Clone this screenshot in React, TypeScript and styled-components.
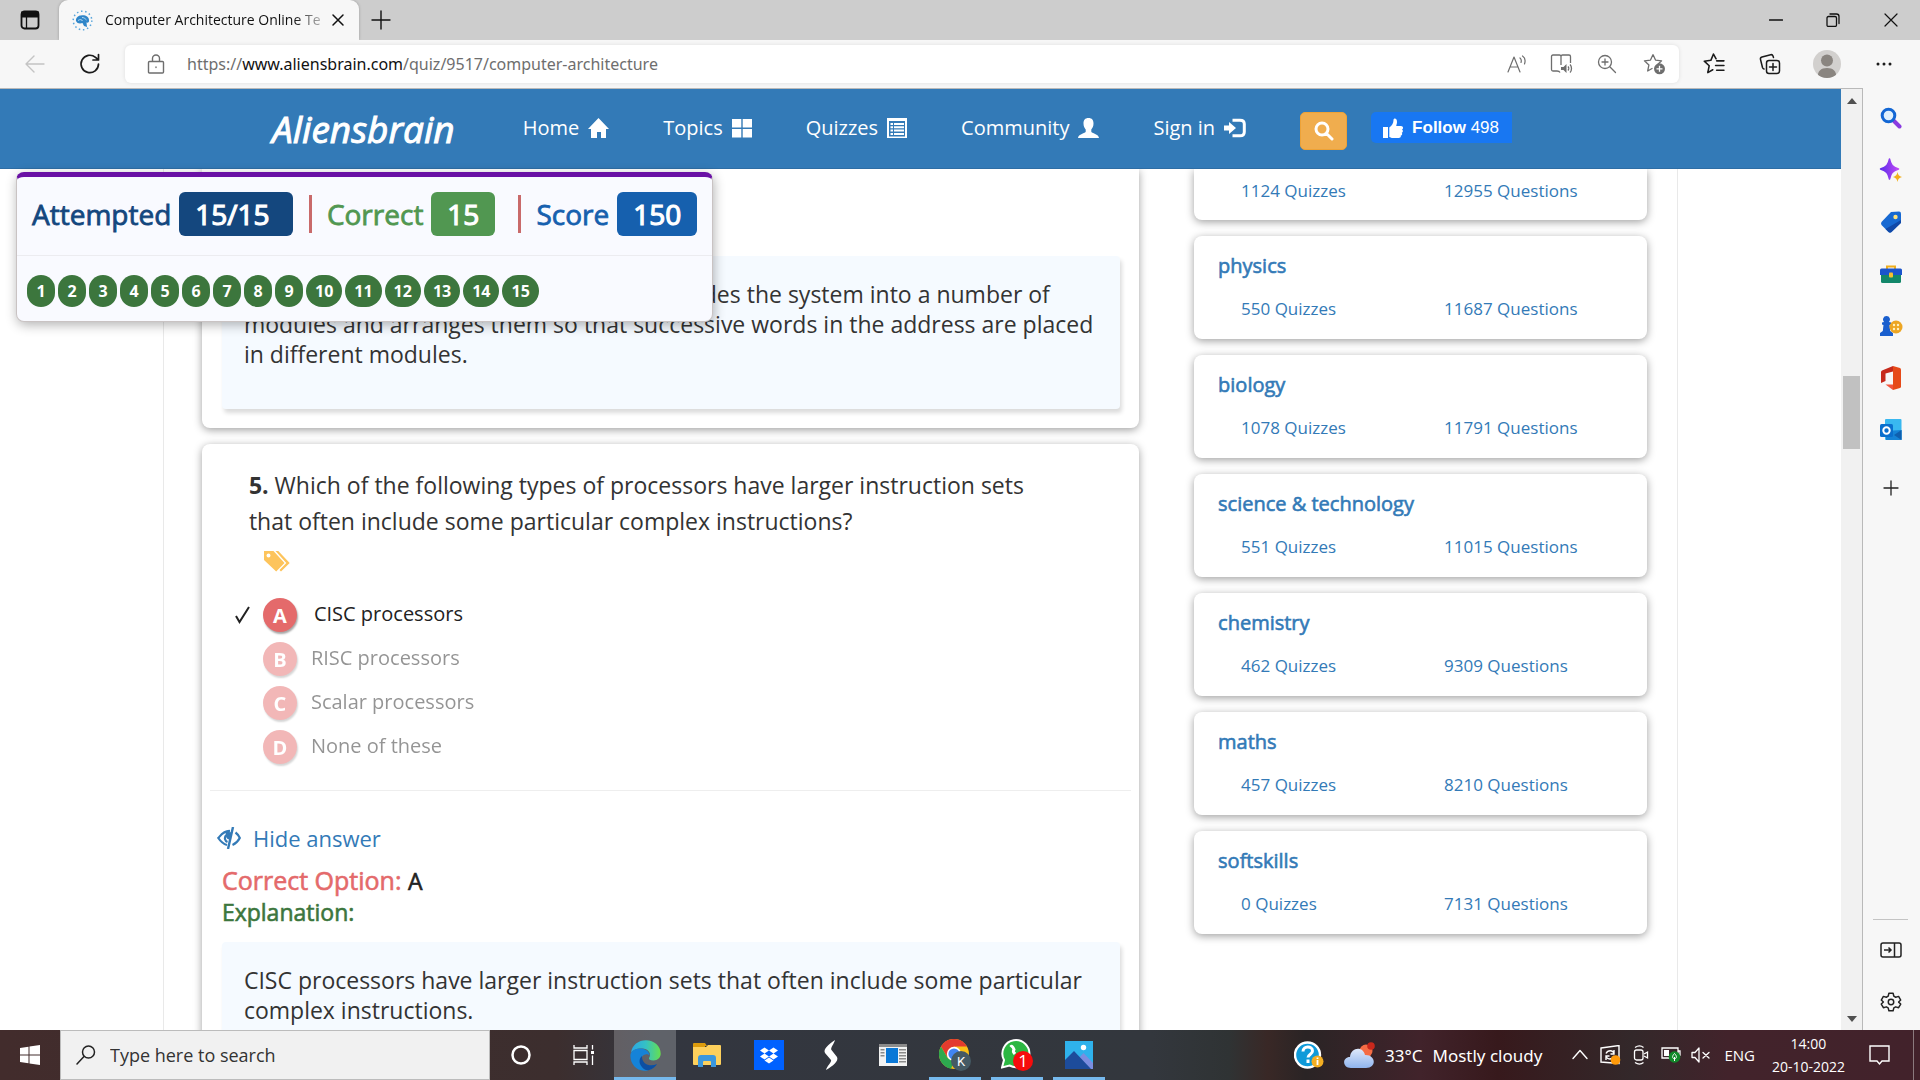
import React from "react";
import styled, { createGlobalStyle, css } from "styled-components";

const ui = `"Open Sans", "Noto Sans", sans-serif`;
const chrome = `"Noto Sans", "Open Sans", sans-serif`;
const blue = "#337ab7";

const Global = createGlobalStyle`
  *, *::before, *::after { box-sizing: border-box; }
  html, body { margin: 0; padding: 0; overflow: hidden; }
  body { font-family: ${ui}; font-size: 16px; color: #333; background: #fff; }
  button { font: inherit; color: inherit; border: 0; padding: 0; background: none; cursor: pointer; }
  h1, h2, h3, p, ul, ol { margin: 0; padding: 0; font-weight: 400; list-style: none; }
  a { text-decoration: none; color: inherit; }
  svg { display: block; flex: none; }
`;

const heavy = css`
  -webkit-text-stroke: 0.6px currentColor;
`;

const Screen = styled.div`
  display: flex;
  flex-direction: column;
  height: 100vh;
  overflow: hidden;
`;

/* ---------- browser chrome ---------- */

const TabStrip = styled.header`
  flex: none;
  height: 40px;
  display: flex;
  align-items: stretch;
  background: #cdcdcd;
  color: #111;
`;
const IconButton = styled.button<{ $w: number; $muted?: boolean }>`
  width: ${(p) => p.$w}px;
  flex: none;
  display: flex;
  align-items: center;
  justify-content: center;
  color: ${(p) => (p.$muted ? "#c4c4c4" : "inherit")};
`;
const Tab = styled.div`
  width: 300px;
  display: flex;
  align-items: center;
  gap: 12px;
  padding: 0 11px 0 13px;
  background: #f7f7f7;
  border-radius: 9px 9px 0 0;
  box-shadow: 0 0 3px rgba(0, 0, 0, 0.25);
`;
const TabTitle = styled.span`
  flex: 1;
  min-width: 0;
  margin-right: -8px;
  overflow: hidden;
  white-space: nowrap;
  font-size: 14px;
  line-height: 20px;
  padding-bottom: 1px;
  mask-image: linear-gradient(90deg, #000 86%, transparent 104%);
`;
const Spacer = styled.div`
  flex: 1;
`;
const Toolbar = styled.div`
  flex: none;
  height: 48px;
  display: flex;
  align-items: center;
  background: #f7f7f7;
  color: #1b1b1b;
  padding: 0 8px;
`;
const AddressBar = styled.div`
  flex: 1;
  height: 38px;
  margin: 0 7px;
  display: flex;
  align-items: center;
  background: #fff;
  border-radius: 6px;
  box-shadow: 0 0 4px rgba(0, 0, 0, 0.1);
  color: #6e6e6e;
`;
const Url = styled.span`
  flex: 1;
  font-family: ${chrome};
  font-size: 16px;
  b {
    font-weight: 400;
    color: #111;
  }
`;
const Avatar = styled.span`
  width: 28px;
  height: 28px;
  border-radius: 50%;
  overflow: hidden;
  background: #d2d0ce;
`;

const Middle = styled.div`
  flex: 1;
  min-height: 0;
  display: flex;
`;
const Viewport = styled.main`
  flex: 1;
  min-width: 0;
  display: flex;
  flex-direction: column;
  position: relative;
  border-top: 1px solid #b9b9b9;
  background: #fff;
`;
const ScrollTrack = styled.div`
  flex: none;
  width: 22px;
  display: flex;
  flex-direction: column;
  align-items: center;
  justify-content: space-between;
  padding: 7px 0 6px;
  background: #f1f1f1;
  border-top: 1px solid #b9b9b9;
  border-right: 1px solid #b9b9b9;
  position: relative;
`;
const Thumb = styled.div`
  position: absolute;
  left: 2px;
  right: 2px;
  top: 30.5%;
  height: 73px;
  background: #c1c1c1;
`;
const EdgeBar = styled.aside`
  flex: none;
  width: 57px;
  display: flex;
  flex-direction: column;
  align-items: center;
  background: #f7f7f7;
  color: #222;
  padding: 4px 2px 2px 0;
`;
const EdgeItem = styled.button`
  width: 48px;
  height: 52px;
  display: flex;
  align-items: center;
  justify-content: center;
`;
const AddItem = styled(EdgeItem)`
  margin-top: 6px;
`;
const EdgeRule = styled.div`
  width: 35px;
  height: 1px;
  background: #c4c4c4;
  margin-bottom: 4px;
`;

/* ---------- site ---------- */

const SiteHeader = styled.header`
  flex: none;
  height: 80px;
  display: flex;
  align-items: flex-start;
  padding-left: 272px;
  background: ${blue};
  border-bottom: 1px solid #2e6da4;
  color: #fff;
`;
const Brand = styled.a`
  margin: 16px 68px 0 0;
  font-size: 37px;
  line-height: 48px;
  font-style: italic;
  -webkit-text-stroke: 1px currentColor;
`;
const Nav = styled.nav`
  display: flex;
  gap: 54px;
  margin: 24px 54px 0 0;
`;
const NavLink = styled.a`
  display: flex;
  align-items: center;
  gap: 9px;
  font-size: 20px;
  line-height: 30px;
  white-space: nowrap;
`;
const SearchButton = styled.button`
  width: 47px;
  height: 38px;
  margin: 23px 24px 0 0;
  display: flex;
  align-items: center;
  justify-content: center;
  background: #f0ad4e;
  border: 1px solid #eea236;
  border-radius: 5px;
`;
const Follow = styled.button`
  height: 31px;
  margin-top: 23px;
  padding: 0 13px 0 12px;
  display: flex;
  align-items: center;
  gap: 9px;
  background: #1877f2;
  border-radius: 5px 0 0 5px;
  font-family: "Liberation Sans", Arial, sans-serif;
  font-size: 17px;
  white-space: nowrap;
`;
const Scroller = styled.div`
  flex: 1;
  min-height: 0;
  overflow: hidden;
`;
const Container = styled.div`
  width: 82.3%;
  min-height: 100%;
  margin: 0 auto;
  padding: 0 30px 0 38px;
  border: solid #e9e9e9;
  border-width: 0 1px;
  display: flex;
  align-items: flex-start;
  gap: 55px;
`;
const Questions = styled.div`
  flex: 1;
  min-width: 0;
`;
const cardLook = css<{ $cut?: boolean }>`
  background: #fff;
  border-radius: ${(p) => (p.$cut ? "0 0 8px 8px" : "8px")};
  box-shadow: 0 2px 9px rgba(0, 0, 0, 0.38);
  margin-bottom: 16px;
`;
const Card = styled.article<{ $cut?: boolean }>`
  ${cardLook}
  padding: ${(p) => (p.$cut ? "87px 19px 19px 20px" : "23px 8px 19px")};
`;
const Note = styled.div`
  background: #f5faff;
  padding: 23px 24px 40px 22px;
  border-radius: 4px;
  box-shadow: 2px 4px 4px rgba(0, 0, 0, 0.14);
  font-size: 23px;
  line-height: 30px;
`;
const Prompt = styled.h2`
  padding: 0 39px;
  max-width: 880px;
  font-size: 23px;
  line-height: 36px;
`;
const Tags = styled.div`
  padding: 12px 54px 21px;
`;
const Options = styled.ul`
  padding: 0 25px;
`;
const Option = styled.button<{ $picked: boolean }>`
  display: flex;
  align-items: center;
  height: 44px;
  font-size: 20px;
  color: #222;
  > span:first-child { width: 28px; }
  > span:nth-child(2), > span:nth-child(3) { opacity: ${(p) => (p.$picked ? 1 : 0.48)}; }
  > span:nth-child(3) { margin-left: ${(p) => (p.$picked ? 17 : 14)}px; line-height: 27px; padding-bottom: 4px; }
`;
const Letter = styled.span`
  width: 34px;
  height: 34px;
  border-radius: 50%;
  display: grid;
  place-items: center;
  background: #e46a6b;
  box-shadow: 1px 2px 2px rgba(0, 0, 0, 0.35);
  color: #fff;
  font-weight: 700;
`;
const Rule = styled.hr`
  height: 1px;
  margin: 21px 0 31px;
  border: 0;
  background: #eee;
`;
const Answer = styled.div`
  padding: 0 11px 0 12px;
`;
const HideLink = styled.button`
  display: flex;
  align-items: center;
  gap: 12px;
  margin-left: -5px;
  font-size: 22px;
  line-height: 32px;
  color: ${blue};
`;
const Verdict = styled.p<{ $color: string; $size: number }>`
  font-size: ${(p) => p.$size}px;
  line-height: 31px;
  color: ${(p) => p.$color};
  ${heavy}
  b { font-weight: 400; font-size: 23px; color: #222; }
`;
const AnswerText = styled.div`
  padding-top: 11px;
  margin-bottom: 14px;
`;

const Subjects = styled.aside`
  flex: none;
  width: 453px;
`;
const Subject = styled.a<{ $cut?: boolean }>`
  ${cardLook}
  display: block;
  padding: ${(p) => (p.$cut ? "11px 24px 18px" : "18px 24px 19px")};
  color: ${blue};
`;
const SubjectName = styled.h3`
  font-size: 20px;
  line-height: 24px;
  margin-bottom: 20px;
  ${heavy}
`;
const Counts = styled.div`
  display: grid;
  grid-template-columns: 203px 1fr;
  padding-left: 23px;
  font-size: 17px;
  line-height: 22px;
`;

/* ---------- floating score panel ---------- */

const ScorePanel = styled.section`
  position: absolute;
  z-index: 2;
  left: 16px;
  top: 83px;
  background: #f9faff;
  border: 1px solid #c9c3c3;
  border-top: 5px solid #6a11a5;
  border-radius: 8px;
  box-shadow: 1px 3px 12px rgba(0, 0, 0, 0.3);
`;
const ScoreRow = styled.div`
  display: flex;
  align-items: center;
  padding: 15px 15px 19px;
  border-bottom: 1px solid #ececf0;
`;
const Score = styled.div<{ $color: string }>`
  display: flex;
  align-items: center;
  gap: 8px;
  font-size: 28px;
  line-height: 44px;
  color: ${(p) => p.$color};
  -webkit-text-stroke: 0.8px currentColor;
  b {
    padding: 0 16px;
    border-radius: 6px;
    background: ${(p) => p.$color};
    color: #fff;
    font-weight: 400;
    -webkit-text-stroke: 1.2px currentColor;
  }
`;
const Divider = styled.span<{ $wide?: boolean }>`
  width: 3px;
  height: 38px;
  margin: 0 15px 0 ${(p) => (p.$wide ? 23 : 16)}px;
  background: #c96a6a;
`;
const Pills = styled.ol`
  display: flex;
  gap: 3px;
  padding: 19px 10px 14px;
`;
const Pill = styled.button`
  height: 32px;
  min-width: 28px;
  padding: 0 9px;
  border-radius: 16px;
  background: #3c763d;
  color: #fff;
  font-weight: 700;
  font-size: 16px;
`;

/* ---------- taskbar ---------- */

const Taskbar = styled.footer`
  flex: none;
  height: 50px;
  display: flex;
  align-items: stretch;
  color: #fff;
  background: linear-gradient(90deg, #422c2c 0, #3c2e2e 29%, #33363f 34%, #33373d 60%, #2f3334 64%, #392826 66%, #2a2425 68%, #41232b 74%, #37191c 78%, #33282a 85%, #42232b 90%, #42222b 100%);
`;
const SearchBox = styled.label`
  width: 430px;
  display: flex;
  align-items: center;
  gap: 14px;
  padding-left: 15px;
  background: #f1f1f1;
  border: 1px solid #bcbcbc;
  color: #222;
  input {
    flex: 1;
    min-width: 0;
    border: 0;
    outline: 0;
    padding: 0;
    background: none;
    font: 18px ${ui};
    color: #222;
  }
  input::placeholder { color: #333; opacity: 1; }
`;
const AppButton = styled.button<{ $state?: "active" | "open" }>`
  width: 62px;
  display: flex;
  align-items: center;
  justify-content: center;
  position: relative;
  background: ${(p) => (p.$state === "active" ? "rgba(255,255,255,.22)" : "none")};
  &::after {
    content: "";
    display: ${(p) => (p.$state ? "block" : "none")};
    position: absolute;
    bottom: 0;
    left: ${(p) => (p.$state === "open" ? 5 : 0)}px;
    right: ${(p) => (p.$state === "open" ? 5 : 0)}px;
    height: 3px;
    background: #76b9ed;
  }
`;
const Tray = styled.div`
  display: flex;
  align-items: center;
  white-space: nowrap;
`;
const Weather = styled.button`
  display: flex;
  align-items: center;
  gap: 10px;
  margin: 0 23px 0 20px;
  font-family: ${chrome};
  font-size: 17px;
`;
const Lang = styled.button`
  margin: 0 17px 0 8px;
  font-size: 15px;
`;
const Clock = styled.time`
  text-align: center;
  font-size: 14px;
  line-height: 23px;
`;
const Corner = styled.div`
  width: 7px;
  align-self: stretch;
  border-left: 1px solid #8b7a7e;
`;

/* ---------- icons ---------- */

type LineProps = { s?: number; w?: number; d: string; vb?: number };
const Line = ({ s = 20, w = 1.5, d, vb = 20 }: LineProps) => (
  <svg width={s} height={s} viewBox={`0 0 ${vb} ${vb}`} fill="none" stroke="currentColor" strokeWidth={w} strokeLinecap="round" strokeLinejoin="round">
    <path d={d} />
  </svg>
);
const Solid = ({ s = 20, d, vb = 20, c = "currentColor" }: { s?: number; d: string; vb?: number; c?: string }) => (
  <svg width={s} height={s} viewBox={`0 0 ${vb} ${vb}`} fill={c} fillRule="evenodd"><path d={d} /></svg>
);

const TabActions = () => (
  <svg width="20" height="20" viewBox="0 0 20 20" fill="none" stroke="#111" strokeWidth="1.8">
    <rect x="1.5" y="1.5" width="17" height="17" rx="3" /><path d="M2 2.5h16v4H2z" fill="#111" /><path d="M6.5 6v12" strokeWidth="1.3" />
  </svg>
);
const Favicon = () => (
  <svg width="21" height="21" viewBox="0 0 21 21">
    <circle cx="10.5" cy="10.5" r="9.3" fill="none" stroke="#57a5dc" strokeWidth="1.5" strokeDasharray="1.5 2.7" />
    <path d="M4 11c-.6-3 2-5.500 5-5.500 3.500-1 8 1 8 4.500.4 2-.8 3-2.500 2.600L15 17l-3-1-1.500-3C8 14 5 13.500 4 11z" fill="#2f86c9" />
    <path d="M6 10.500c2-1.500 4-1 4.500.5M10 7.500c2 0 3 1 4.500 2.500" fill="none" stroke="#bfe0f5" strokeWidth=".9" />
  </svg>
);
const ReadAloud = () => <Line d="M1 18L7 3l6 15M3 13h8M13 4c1.500 1.300 1.500 3 1 4.500M15.500 2c3 2 3 5 2 8" w={1.2} />;
const Reader = () => (
  <svg width="23" height="22" viewBox="0 0 23 22" fill="none" stroke="currentColor" strokeWidth="1.3" strokeLinejoin="round">
    <path d="M11 12V3.500Q11 2 9.500 2H3Q1.500 2 1.500 3.500v13Q1.500 18 3 18h4c2 0 2.500.5 3 1.500M11 3.500Q11 2 12.500 2H19q1.500 0 1.500 1.500V10" />
    <path d="M11 14h2.500l3-3v9l-3-3H11z" fill="currentColor" stroke="none" /><path d="M18 13.500c1 1 1 3 0 4M20 11.500c2 2 2 6 0 8" />
  </svg>
);
const ZoomIn = () => <Line d="M1.500 8a6.500 6.500 0 1 0 13 0 6.500 6.500 0 1 0-13 0M12.800 12.800L18.500 18.500M8 5v6M5 8h6" w={1.3} />;
const starD = "M10 1.500l2.500 5.600 6.100.7-4.500 4.100M10 1.500L7.500 7.100l-6.100.7 4.500 4.100-1.200 6.100L9.500 15.300";
const StarAdd = () => (
  <svg width="23" height="22" viewBox="0 0 23 22" fill="none" stroke="currentColor" strokeWidth="1.3" strokeLinejoin="round">
    <path d={starD} /><circle cx="16.500" cy="15.800" r="5.500" fill="currentColor" stroke="none" /><path d="M16.500 12.800v6M13.500 15.800h6" stroke="#fff" />
  </svg>
);
const Favorites = () => <Line s={22} vb={21} d="M12.500 5.500L10 1 7.500 7l-6.300.8 4.700 4.400-1.300 6.500 4.700-2.700M13 7.500h7M12 12h8M13 16.500h7" w={1.5} />;
const Collections = () => (
  <svg width="22" height="22" viewBox="0 0 22 22" fill="none" stroke="currentColor" strokeWidth="1.5" strokeLinejoin="round" strokeLinecap="round">
    <rect x="7.500" y="7.500" width="13" height="13" rx="2.500" /><path d="M14 10.500v7M10.500 14h7M14.500 4.500L14 3q-.6-1.700-2.300-1.300L3 4Q1 4.600 1.500 6.500l2 8q.4 1.300 1.500 1.500" />
  </svg>
);
const Person = () => (
  <svg width="28" height="28" viewBox="0 0 28 28" fill="#8a8580"><circle cx="14" cy="10.500" r="6" /><path d="M5 28c-1-7 3-10 9-10s10 3 9 10z" /></svg>
);
const Gear = () => (
  <Line s={22} vb={24} w={1.600} d="M12 9a3 3 0 1 0 0 6 3 3 0 1 0 0-6M9.700 2.500h4.600l.8 3.200 2 1.100 3.200-.9 2.300 4-2.300 2.100 0 .1 2.300 2.100-2.300 4-3.200-.9-2 1.100-.8 3.200H9.700l-.8-3.200-2-1.100-3.200.9-2.300-4L3.700 12 1.400 9.900l2.300-4 3.200.9 2-1.100z" />
);

const HomeI = () => <Solid s={21} vb={21} d="M10.500 0L21 11h-3v9h-5v-6H9v6H3v-9H0z" />;
const GridI = () => <Solid d="M0 1h9.300v8.500H0zM10.700 1H20v8.500h-9.300zM0 11h9.300v8.500H0zM10.700 11H20v8.500h-9.300z" />;
const ListI = () => <Solid d="M0 0h20v20H0zM2 3v15.500h16V3zM3.500 5H6v2H3.500zM7 5h10v2H7zM3.500 8.300H6v2H3.500zM7 8.300h10v2H7zM3.500 11.600H6v2H3.500zM7 11.600h10v2H7zM3.500 15H6v2H3.500zM7 15h10v2H7z" />;
const UserI = () => <Solid s={21} vb={21} d="M10.500 0c3.600 0 5 2.200 5 5.500 0 3-1 4.500-2.200 6v2.300c0 1.400 7.700 2.400 7.700 6.200H0c0-3.800 7.700-4.800 7.700-6.200v-2.300c-1.200-1.500-2.200-3-2.200-6C5.500 2.200 6.900 0 10.500 0z" />;
const SignI = () => (
  <svg width="22" height="20" viewBox="0 0 22 20"><path d="M0 7.500h5V4l7 6-7 6v-3.500H0z" fill="#fff" /><path d="M8.500 2.200H16Q20.300 2.200 20.300 6v8q0 3.800-4.300 3.800H8.500" fill="none" stroke="#fff" strokeWidth="3" /></svg>
);
const LensI = () => <Line s={20} w={3} d="M2 8a6 6 0 1 0 12 0 6 6 0 1 0-12 0M12.500 12.500l5.500 5.500" />;
const Thumbs = () => <Solid d="M0 9h5v11H0zM6.300 19V9.500C9 8 10.500 5 10.500 2c0-2 3.500-2.500 3.500 2 0 1.500-.5 2.500-.8 4H18c2.500 0 2.500 3 1 3.500 1.500.8 1 3-.3 3.300 1 1 .3 2.600-1 2.800.5 1.300-.5 2.400-2 2.400H10c-1.500 0-2.500-.5-3.700-1z" />;
const TagsI = () => (
  <svg width="26" height="21" viewBox="0 0 26 21" fill="#fdc45c"><path fillRule="evenodd" d="M0 0h9.500l11 12-8.300 8.500L0 9zM4.500 2.500a2 2 0 1 0 0 4 2 2 0 1 0 0-4z" /><path d="M11.500 0h2.800L25.700 12l-8.700 8.500-1.500-1.400L22.300 12z" /></svg>
);
const Tick = () => <svg width="15" height="18" viewBox="0 0 15 18" fill="none" stroke="#222" strokeWidth="2"><path d="M1 10l3.500 6L14 1" /></svg>;
const EyeOff = () => (
  <svg width="24" height="22" viewBox="0 0 24 22" fill="none" stroke={blue} strokeWidth="2.200"><path d="M13 4C7 3.500 4 8 1.300 11c2 3 5 6 8.700 7M18.500 5.500c2 1.500 3.500 3.500 4.300 5.500-1.600 3-4 5.500-7.300 7M9 8c-2 3-1 6 1.500 7" /><path d="M16 0l-5 22" strokeWidth="2.400" /><path d="M9 4.500l6 1-2.500 7C9 12.500 8 8 9 4.500z" fill={blue} stroke="none" /></svg>
);

const EdgeSearch = () => (
  <svg width="22" height="22" viewBox="0 0 22 22" fill="none"><path d="M13 13l6.500 6.500" stroke="#8a3be0" strokeWidth="4" strokeLinecap="round" /><circle cx="8.500" cy="8.500" r="6.300" fill="#dff0fd" stroke="#1266d4" strokeWidth="3" /></svg>
);
const Sparkle = () => (
  <svg width="24" height="24" viewBox="0 0 24 24"><defs><linearGradient id="sp"><stop stopColor="#5b2bea" /><stop offset="1" stopColor="#c04af5" /></linearGradient></defs><path d="M10.500 1c1.200 6 3 8 9 10-6 2-7.800 4-9 10-1.200-6-3-8-9-10 6-2 7.800-4 9-10z" fill="url(#sp)" stroke="url(#sp)" strokeWidth="1.500" strokeLinejoin="round" /><path d="M18.500 14c.6 3 1.500 4 4.500 5-3 1-3.900 2-4.500 5-.6-3-1.500-4-4.500-5 3-1 3.900-2 4.500-5z" fill="#f2b01e" /></svg>
);
const Shopping = () => (
  <svg width="22" height="22" viewBox="0 0 22 22"><path d="M11 1l8-.5Q21 .5 21 2.500v9L11.500 21q-1.500 1-3 0l-7-7q-1-1.500 0-3z" fill="#1769d2" /><path d="M21 9v3L11.500 21q-1.500 1-3 0l-3-3z" fill="#1149a8" /><circle cx="15.500" cy="6" r="2.200" fill="#ffe27a" /></svg>
);
const Toolbox = () => (
  <svg width="22" height="20" viewBox="0 0 22 20"><path d="M7 6V2.500h8V6" fill="none" stroke="#f0ae1c" strokeWidth="2" /><rect x="1" y="9" width="20" height="10" rx="1.500" fill="#13876a" /><path d="M0 6q0-1.500 1.500-1.500h19Q22 4.500 22 6v5H0z" fill="#1b55cc" /><rect x="9" y="8.500" width="4" height="5" rx="1" fill="#f7c02e" /></svg>
);
const Games = () => (
  <svg width="24" height="22" viewBox="0 0 24 22"><path d="M7.500 1a3.500 3.500 0 0 1 2.500 6l2 .5v2l-1.500.5.7 6 2.800 2v3H1v-3l2.800-2 .7-6L3 9.500v-2L5 7a3.500 3.500 0 0 1 2.500-6z" fill="#1a5fce" /><circle cx="17" cy="12" r="6.500" fill="#eda623" /><g fill="#fff2c0"><circle cx="15" cy="10" r="1.200" /><circle cx="19" cy="10" r="1.200" /><circle cx="15" cy="14" r="1.200" /><circle cx="19" cy="14" r="1.200" /></g></svg>
);
const Office = () => (
  <svg width="22" height="24" viewBox="0 0 22 24"><path d="M13 0L2 4.500Q1 5 1 6v11l4.500-2V7.500L13 5.500z" fill="#c62a1c" /><path d="M13 0l7 2q1 .5 1 1.500v17q0 1-1 1.500l-7 2z" fill="#e64a19" /><path d="M5.500 18.500H13V24z" fill="#f2543d" /></svg>
);
const Outlook = () => (
  <svg width="22" height="22" viewBox="0 0 22 22"><rect x="5" y="0" width="16.500" height="21" rx="1" fill="#39b8f0" /><path d="M6 12l15.500-1V21H6z" fill="#1583d6" /><path d="M21.500 11L14 16l7.500 5z" fill="#0f5fae" /><rect x="0" y="5" width="13" height="13" rx="1.500" fill="#0a6fcd" /><circle cx="6.500" cy="11.500" r="3.200" fill="none" stroke="#fff" strokeWidth="2" /></svg>
);
const PanelI = () => (
  <svg width="22" height="16" viewBox="0 0 22 16" fill="none" stroke="currentColor" strokeWidth="1.500"><rect x="1" y="1" width="20" height="14" rx="2" /><path d="M14.500 1v14M4 8h7M8.500 5.500L11 8l-2.500 2.500" /></svg>
);

const Win = () => <Solid d="M0 3l8.500-1.200v7.700H0zM9.500 1.600L20 0v9.500H9.500zM0 10.500h8.500v7.700L0 17zM9.500 10.500H20V20L9.500 18.400z" />;
const Ring = () => <svg width="20" height="20" viewBox="0 0 20 20"><circle cx="10" cy="10" r="8.500" fill="none" stroke="#fff" strokeWidth="2.500" /></svg>;
const TaskView = () => <svg width="21" height="20" viewBox="0 0 21 20" fill="none" stroke="#fff" strokeWidth="1.300"><path d="M1 5.500h13v9H1zM1 0v3h13V0M1 20v-3h13v3M19.500 0v4.500M19.500 10.500V20" /><path d="M18 6h3v3h-3z" fill="#fff" stroke="none" /></svg>;
const EdgeI = () => (
  <svg width="31" height="31" viewBox="0 0 31 31"><defs><linearGradient id="e1"><stop stopColor="#2aa6e6" /><stop offset=".5" stopColor="#35c1c4" /><stop offset="1" stopColor="#66e04e" /></linearGradient></defs>
    <path d="M1 13C2 5 8.500.3 16 .3 24 .3 30.700 6 30.700 13.500c0 4-3 7-7.200 7-3.500 0-5-1.500-4.500-2.500 2.500-3 .5-9-6-9.500C7 8 2.500 10 1 13z" fill="url(#e1)" />
    <path d="M.4 16C0 11 5.500 8 11.500 8.500c5 .5 8 4 8 7-1.500-2-6-2-7.500 1.500-2 6 5 11 14 7.500C22 30 17 31 14 30.700 6 30.500.6 24 .4 16z" fill="#1583d8" />
    <path d="M12 16c-2 1.500-3.500 5-1.500 9 2 3.500 5 5.500 8 5.300 4-1 7-3.500 8.500-6.300-7 3.500-15.500 0-15-8z" fill="#0c4fa3" /></svg>
);
const Folder = () => <svg width="28" height="24" viewBox="0 0 28 24"><path d="M0 1q0-1 1-1h11l2 3h-2v3H0z" fill="#dc9b0c" /><path d="M0 4h13l2-2h12q1 0 1 1v18q0 1-1 1H1q-1 0-1-1z" fill="#fdd05c" /><path d="M5 24V15q0-3 3-3h12q3 0 3 3v9h-5v-5q0-1-1-1h-6q-1 0-1 1v5z" fill="#3b97dd" /></svg>;
const Dropbox = () => <svg width="30" height="30" viewBox="0 0 30 30"><path fill="#0061ff" d="M0 0h30v30H0z" /><path fill="#fff" d="M10.500 7.500l4.500 3-4.500 3-4.500-3zM19.500 7.500l4.500 3-4.500 3-4.500-3zM10.500 13.500l4.500 3-4.500 3-4.500-3zM19.500 13.500l4.500 3-4.500 3-4.500-3zM15 17.500l4.500 3-4.500 3-4.500-3z" /></svg>;
const Bolt = () => <svg width="16" height="30" viewBox="0 0 16 30" fill="#fff"><path d="M12 0C5 5 0 9 2 13l6 7c1 2-4 6-5 10 7-4 13-9 11-13L8.500 10C7 8 11 4 12 0z" /></svg>;
const DocApp = () => <svg width="28" height="22" viewBox="0 0 28 22"><path fill="#f2f2f2" d="M0 0h28v22H0z" /><path fill="#8b8b8b" d="M0 0h28v3H0zM1.500 5h4v1.500h-4zM1.500 8h4v1.500h-4zM1.500 11h4v1.500h-4zM20 5h7v1.500h-7zM20 8h7v1.500h-7zM20 11h7v1.500h-7zM20 14h7v1.500h-7zM20 17h7v1.500h-7z" /><path fill="#0a78d7" d="M7 4h12v15H7z" /></svg>;
const Chrome = () => (
  <svg width="32" height="32" viewBox="0 0 32 32"><circle cx="15" cy="15" r="15" fill="#fbc116" /><path d="M2 7.500A15 15 0 0 1 28 7.500H15l-6.500 11z" fill="#e33b2e" /><path d="M2 7.500l6.500 11.300L15 22.500l-3 7.300A15 15 0 0 1 2 7.500z" fill="#2da94f" /><circle cx="15" cy="15" r="7.200" fill="#fff" /><circle cx="15" cy="15" r="5.600" fill="#4285f4" /><circle cx="22" cy="22" r="10" fill="#455a64" /><text x="22" y="26.500" fontSize="13" fontFamily="Roboto" fill="#fff" textAnchor="middle">K</text></svg>
);
const WhatsApp = () => (
  <svg width="32" height="32" viewBox="0 0 32 32"><path d="M1 28.500l2-7.500A13.500 13.500 0 1 1 8.500 26.500z" fill="#2cb742" stroke="#fff" strokeWidth="2" /><path d="M9.500 8c1.500-1.500 2.500 0 3.500 2.500-1 2-1 2 1 4.500" fill="none" stroke="#fff" strokeWidth="3" /><circle cx="22" cy="22" r="10" fill="#f60c0c" /><text x="22" y="28" fontSize="17" fontFamily="Open Sans" fill="#fff" textAnchor="middle">1</text></svg>
);
const Photos = () => <svg width="28" height="28" viewBox="0 0 28 28"><path fill="#2fb2ec" d="M0 0h28v28H0z" /><path fill="#7b8ee0" d="M14 17l4.500-5L28 22v6H16z" /><path fill="#1d4c9b" d="M0 19l9-9 17 18H0z" /><circle cx="18.500" cy="6.500" r="2.700" fill="#fff" /></svg>;
const Help = () => <svg width="30" height="28" viewBox="0 0 30 28"><circle cx="13.500" cy="14" r="12.500" fill="#0f9ad9" stroke="#fff" strokeWidth="2.400" /><path d="M9 10.500c0-6 9.500-6 9.500-.5 0 3.500-4.500 3.500-4.500 6.500M14 18.500v3.500" fill="none" stroke="#fff" strokeWidth="3" /><circle cx="23.500" cy="20.500" r="6" fill="#f3ae22" /><path d="M23.500 19v5M23.500 16.500v1.500" stroke="#fff" strokeWidth="1.800" /></svg>;
const Cloud = () => <svg width="31" height="26" viewBox="0 0 31 26"><defs><linearGradient id="cl" x2="0" y2="1"><stop stopColor="#dfe9fb" /><stop offset="1" stopColor="#8fb4ee" /></linearGradient></defs><circle cx="22" cy="9" r="6.500" fill="#f56c45" /><circle cx="27" cy="4" r="3.800" fill="#c8281c" /><path d="M7 26c-9 0-9-11-1-11C7 5 19 4 21 13c11-.5 12 13 1 13z" fill="url(#cl)" /></svg>;
const Sync = () => <svg width="21" height="20" viewBox="0 0 21 20" fill="none" stroke="#fff" strokeWidth="1.400"><path d="M1 3l18-2.500v18L1 17z" /><path d="M6 8.500c2-4 7-3.500 8 0M14 5v4h-3.500M14 11c-2 4-6 4-8 .5M6 15v-4h3.500" /><circle cx="15.500" cy="15" r="4.800" fill="#ff9a0a" stroke="none" /></svg>;
const MeetCam = () => <svg width="16" height="20" viewBox="0 0 16 20" fill="none" stroke="#fff" strokeWidth="1.300"><rect x="1.500" y="5" width="8.500" height="10" rx="2" /><path d="M11 9l3.500-2v6L11 11M2 2.500c3-2 6-2 8.500 0M2 17.500c3 2 6 2 8.500 0" /></svg>;
const Battery = () => <svg width="20" height="16" viewBox="0 0 20 16"><path d="M1 1h16v10H1zM17 4h2v4h-2z" fill="none" stroke="#fff" strokeWidth="1.300" /><path d="M3 3h5v6H3z" fill="#fff" /><circle cx="13.500" cy="10" r="5.800" fill="#11892a" /><path d="M13.500 6.500c3 3 2 5 0 5.500-2-.5-3-2.500 0-5.500zM13.500 10v4" fill="none" stroke="#fff" /></svg>;
const Mute = () => <Line s={20} w={1.300} d="M1 7.500h3L8 3v14l-4-4.500H1zM12 7.500l6 5.500M18 7.500L12 13" />;
const Notice = () => <svg width="21" height="21" viewBox="0 0 21 21" fill="none" stroke="#fff" strokeWidth="1.400"><path d="M1 1h19v15h-7l-2.500 3L8 16H1z" /></svg>;

/* ---------- data ---------- */

const subjects = [
  { quizzes: 1124, questions: 12955 },
  { name: "physics", quizzes: 550, questions: 11687 },
  { name: "biology", quizzes: 1078, questions: 11791 },
  { name: "science & technology", quizzes: 551, questions: 11015 },
  { name: "chemistry", quizzes: 462, questions: 9309 },
  { name: "maths", quizzes: 457, questions: 8210 },
  { name: "softskills", quizzes: 0, questions: 7131 },
];
const options = ["CISC processors", "RISC processors", "Scalar processors", "None of these"];
const nav = [
  ["Home", HomeI],
  ["Topics", GridI],
  ["Quizzes", ListI],
  ["Community", UserI],
  ["Sign in", SignI],
] as const;
const edgeApps = [
  ["Search", EdgeSearch],
  ["Discover", Sparkle],
  ["Shopping", Shopping],
  ["Tools", Toolbox],
  ["Games", Games],
  ["Office", Office],
  ["Outlook", Outlook],
] as const;
const apps: [string, React.FC, ("active" | "open")?][] = [
  ["Cortana", Ring],
  ["Task view", TaskView],
  ["Edge", EdgeI, "active"],
  ["File Explorer", Folder],
  ["Dropbox", Dropbox],
  ["Shortcut", Bolt],
  ["Documents", DocApp],
  ["Chrome", Chrome, "open"],
  ["WhatsApp", WhatsApp, "open"],
  ["Photos", Photos, "open"],
];

function BrowserTop() {
  return (
    <>
      <TabStrip>
        <IconButton $w={59} aria-label="Tab actions"><TabActions /></IconButton>
        <Tab>
          <Favicon />
          <TabTitle>Computer Architecture Online Te</TabTitle>
          <button aria-label="Close tab"><Line s={20} d="M5 5l10 10M15 5L5 15" w={1.5} /></button>
        </Tab>
        <IconButton $w={44} aria-label="New tab"><Line s={20} d="M10 1v18M1 10h18" w={1.4} /></IconButton>
        <Spacer />
        <IconButton $w={57} aria-label="Minimize"><Line s={14} vb={14} d="M.5 7h13" w={1.3} /></IconButton>
        <IconButton $w={58} aria-label="Restore"><Line s={14} vb={14} d="M3 3.500h6q1.500 0 1.500 1.500v7q0 1.500-1.500 1.500H2.500Q1 13.500 1 12V5Q1 3.500 2.500 3.500M4 1h6.500Q13 1 13 3.500v7" w={1.3} /></IconButton>
        <IconButton $w={58} aria-label="Close"><Line s={14} vb={14} d="M1 1l12 12M13 1L1 13" w={1.2} /></IconButton>
      </TabStrip>
      <Toolbar>
        <IconButton $w={54} $muted aria-label="Back"><Line s={20} d="M19 10H1M9 2L1 10l8 8" w={1.4} /></IconButton>
        <IconButton $w={56} aria-label="Refresh"><Line s={22} vb={22} d="M19.500 11a8.700 8.700 0 1 1-3-6.600L19 6.500M19.500 1.500v5.500H14" w={1.7} /></IconButton>
        <AddressBar>
          <IconButton $w={62} aria-label="Site information"><Line s={20} d="M3.500 7.500h13q1 0 1 1V18q0 1-1 1h-13q-1 0-1-1V8.500q0-1 1-1zM6.500 7V4.500a3.500 3.500 0 0 1 7 0V7M10 13v.5" w={1.4} /></IconButton>
          <Url>https://<b>www.aliensbrain.com</b>/quiz/9517/computer-architecture</Url>
          <IconButton $w={45} aria-label="Read aloud"><ReadAloud /></IconButton>
          <IconButton $w={45} aria-label="Immersive reader"><Reader /></IconButton>
          <IconButton $w={45} aria-label="Zoom"><ZoomIn /></IconButton>
          <IconButton $w={50} aria-label="Add to favorites"><StarAdd /></IconButton>
        </AddressBar>
        <IconButton $w={56} aria-label="Favorites"><Favorites /></IconButton>
        <IconButton $w={56} aria-label="Collections"><Collections /></IconButton>
        <IconButton $w={58} aria-label="Profile"><Avatar><Person /></Avatar></IconButton>
        <IconButton $w={56} aria-label="More"><Solid s={18} vb={18} d="M3 7.500a1.500 1.500 0 1 0 0 3 1.500 1.500 0 1 0 0-3M9 7.500a1.500 1.500 0 1 0 0 3 1.500 1.500 0 1 0 0-3M15 7.500a1.500 1.500 0 1 0 0 3 1.500 1.500 0 1 0 0-3" /></IconButton>
      </Toolbar>
    </>
  );
}

function Site() {
  return (
    <Viewport>
      <SiteHeader>
        <Brand href="#">Aliensbrain</Brand>
        <Nav>
          {nav.map(([label, Icon]) => (
            <NavLink href="#" key={label}>{label}<Icon /></NavLink>
          ))}
        </Nav>
        <SearchButton aria-label="Search"><LensI /></SearchButton>
        <Follow><Thumbs /><span><b>Follow</b> 498</span></Follow>
      </SiteHeader>

      <ScorePanel>
        <ScoreRow>
          <Score $color="#14477e">Attempted <b>15/15&nbsp;</b></Score>
          <Divider />
          <Score $color="#519751">Correct <b>15</b></Score>
          <Divider $wide />
          <Score $color="#1660ae">Score <b>150</b></Score>
        </ScoreRow>
        <Pills>
          {Array.from({ length: 15 }, (_, i) => (
            <li key={i}><Pill>{i + 1}</Pill></li>
          ))}
        </Pills>
      </ScorePanel>

      <Scroller>
        <Container>
          <Questions>
            <Card $cut>
              <Note>
                Memory interleaving technique usually divides the system into a number of modules and arranges them so
                that successive words in the address are placed in different modules.
              </Note>
            </Card>
            <Card>
              <Prompt>
                <b>5.</b> Which of the following types of processors have larger instruction sets that often include
                some particular complex instructions?
              </Prompt>
              <Tags><TagsI /></Tags>
              <Options>
                {options.map((text, i) => (
                  <li key={text}>
                    <Option $picked={i === 0}>
                      <span>{i === 0 && <Tick />}</span>
                      <Letter>{"ABCD"[i]}</Letter>
                      <span>{text}</span>
                    </Option>
                  </li>
                ))}
              </Options>
              <Rule />
              <Answer>
                <HideLink><EyeOff />Hide answer</HideLink>
                <AnswerText>
                  <Verdict $color="#e46a6b" $size={25}>Correct Option: <b>A</b></Verdict>
                  <Verdict $color="#3c763d" $size={23}>Explanation:</Verdict>
                </AnswerText>
                <Note>
                  CISC processors have larger instruction sets that often include some particular complex
                  instructions.
                </Note>
              </Answer>
            </Card>
          </Questions>
          <Subjects>
            {subjects.map((s) => (
              <Subject href="#" key={s.questions} $cut={!s.name}>
                {s.name && <SubjectName>{s.name}</SubjectName>}
                <Counts>
                  <span>{s.quizzes} Quizzes</span>
                  <span>{s.questions} Questions</span>
                </Counts>
              </Subject>
            ))}
          </Subjects>
        </Container>
      </Scroller>
    </Viewport>
  );
}

export default function App() {
  return (
    <Screen>
      <Global />
      <BrowserTop />
      <Middle>
        <Site />
        <ScrollTrack>
          <Solid s={10} vb={10} d="M0 8l5-6 5 6z" c="#505050" />
          <Thumb />
          <Solid s={10} vb={10} d="M0 2l5 6 5-6z" c="#505050" />
        </ScrollTrack>
        <EdgeBar>
          {edgeApps.map(([label, Icon]) => (
            <EdgeItem key={label} aria-label={label}><Icon /></EdgeItem>
          ))}
          <AddItem aria-label="Add"><Line s={16} vb={16} d="M8 1v14M1 8h14" w={1.3} /></AddItem>
          <Spacer />
          <EdgeRule />
          <EdgeItem aria-label="Hide sidebar"><PanelI /></EdgeItem>
          <EdgeItem aria-label="Settings"><Gear /></EdgeItem>
        </EdgeBar>
      </Middle>
      <Taskbar>
        <IconButton $w={60} aria-label="Start"><Win /></IconButton>
        <SearchBox>
          <Line s={20} d="M6.500 7a6 6 0 1 0 12 0 6 6 0 1 0-12 0M8.200 11.200L1 19" w={1.5} />
          <input placeholder="Type here to search" aria-label="Type here to search" />
        </SearchBox>
        {apps.map(([label, Icon, state]) => (
          <AppButton key={label} aria-label={label} $state={state}><Icon /></AppButton>
        ))}
        <Spacer />
        <Tray>
          <Help />
          <Weather><Cloud /><span>33°C</span><span>Mostly cloudy</span></Weather>
          <IconButton $w={30} aria-label="Show hidden icons"><Line s={16} vb={16} d="M1 11.500l7-8 7 8" w={1.4} /></IconButton>
          <IconButton $w={31} aria-label="Updates"><Sync /></IconButton>
          <IconButton $w={30} aria-label="Camera"><MeetCam /></IconButton>
          <IconButton $w={30} aria-label="Battery"><Battery /></IconButton>
          <IconButton $w={30} aria-label="Volume"><Mute /></IconButton>
          <Lang>ENG</Lang>
          <Clock>14:00<br />20-10-2022</Clock>
          <IconButton $w={68} aria-label="Notifications"><Notice /></IconButton>
          <Corner />
        </Tray>
      </Taskbar>
    </Screen>
  );
}
